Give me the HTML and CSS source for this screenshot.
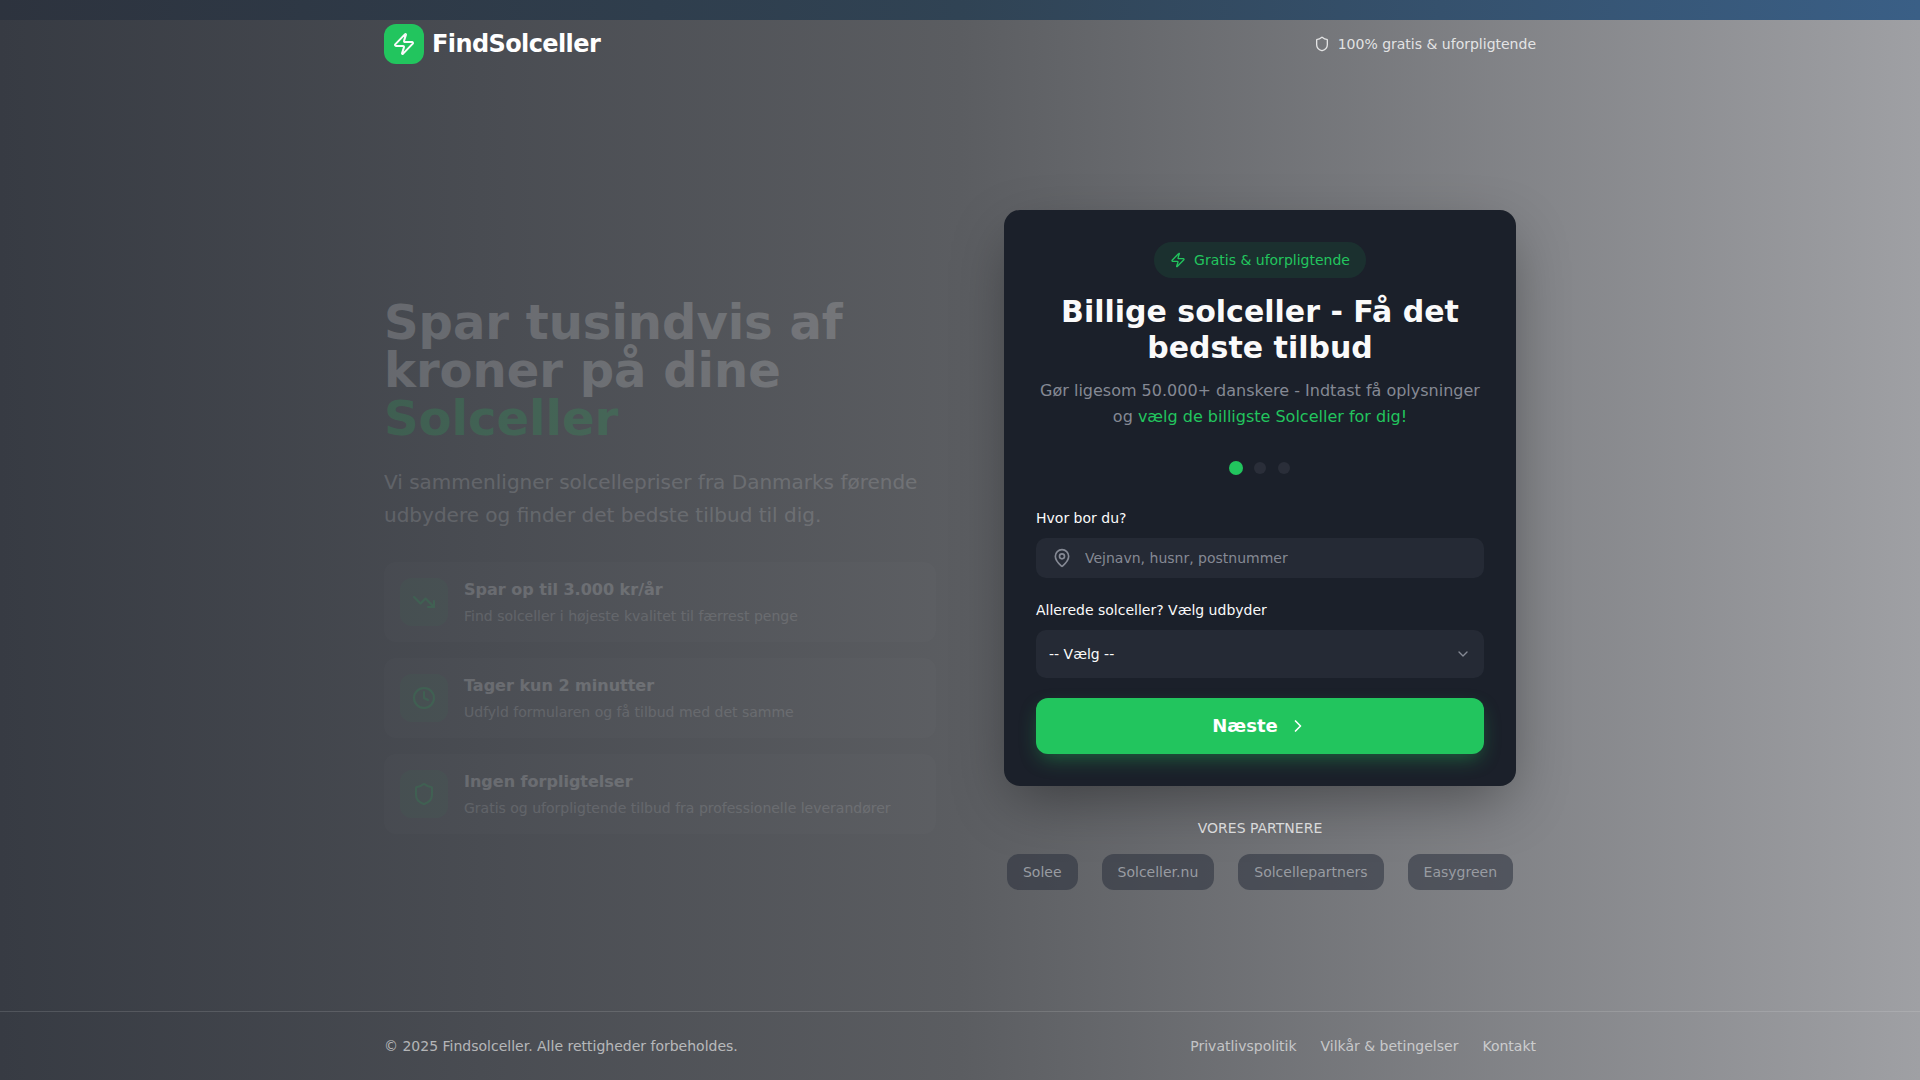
FILE: index.html
```
<!DOCTYPE html>
<html lang="da">
<head>
  <meta charset="UTF-8" />
  <meta name="viewport" content="width=device-width, initial-scale=1.0"/>
  <title>FindSolceller</title>
  <link rel="stylesheet" href="styles.css">
</head>
<body>

  <header class="container header">
    <div class="logo">
      <span class="logo-icon">
        <svg class="icon-md" viewBox="0 0 24 24"><path d="M4 14a1 1 0 0 1-.78-1.63l9.9-10.2a.5.5 0 0 1 .86.46l-1.92 6.02A1 1 0 0 0 13 10h7a1 1 0 0 1 .78 1.63l-9.9 10.2a.5.5 0 0 1-.86-.46l1.92-6.02A1 1 0 0 0 11 14z"/></svg>
      </span>
      <span class="logo-text">FindSolceller</span>
    </div>
    <div class="trust">
      <svg class="icon-sm" viewBox="0 0 24 24"><path d="M20 13c0 5-3.5 7.5-7.66 8.95a1 1 0 0 1-.67-.01C7.5 20.5 4 18 4 13V6a1 1 0 0 1 1-1c2 0 4.5-1.2 6.24-2.72a1.17 1.17 0 0 1 1.52 0C14.51 3.81 17 5 19 5a1 1 0 0 1 1 1z"/></svg>
      <span>100% gratis &amp; uforpligtende</span>
    </div>
  </header>

  <main class="container hero">
    <section class="intro">
      <h1>Spar tusindvis af kroner på dine <span class="green">Solceller</span></h1>
      <p class="lead">Vi sammenligner solcellepriser fra Danmarks førende udbydere og finder det bedste tilbud til dig.</p>

      <div class="features">
        <div class="feature">
          <span class="feature-icon">
            <svg class="icon-md" viewBox="0 0 24 24"><path d="M22 17l-8.5-8.5-5 5L2 7"/><path d="M16 17h6v-6"/></svg>
          </span>
          <div>
            <h3>Spar op til 3.000 kr/år</h3>
            <p>Find solceller i højeste kvalitet til færrest penge</p>
          </div>
        </div>
        <div class="feature">
          <span class="feature-icon">
            <svg class="icon-md" viewBox="0 0 24 24"><circle cx="12" cy="12" r="10"/><path d="M12 6v6l4 2"/></svg>
          </span>
          <div>
            <h3>Tager kun 2 minutter</h3>
            <p>Udfyld formularen og få tilbud med det samme</p>
          </div>
        </div>
        <div class="feature">
          <span class="feature-icon">
            <svg class="icon-md" viewBox="0 0 24 24"><path d="M20 13c0 5-3.5 7.5-7.66 8.95a1 1 0 0 1-.67-.01C7.5 20.5 4 18 4 13V6a1 1 0 0 1 1-1c2 0 4.5-1.2 6.24-2.72a1.17 1.17 0 0 1 1.52 0C14.51 3.81 17 5 19 5a1 1 0 0 1 1 1z"/></svg>
          </span>
          <div>
            <h3>Ingen forpligtelser</h3>
            <p>Gratis og uforpligtende tilbud fra professionelle leverandører</p>
          </div>
        </div>
      </div>
    </section>

    <section class="quote">
      <form class="card">
        <div class="badge">
          <svg class="icon-sm" viewBox="0 0 24 24"><path d="M4 14a1 1 0 0 1-.78-1.63l9.9-10.2a.5.5 0 0 1 .86.46l-1.92 6.02A1 1 0 0 0 13 10h7a1 1 0 0 1 .78 1.63l-9.9 10.2a.5.5 0 0 1-.86-.46l1.92-6.02A1 1 0 0 0 11 14z"/></svg>
          <span>Gratis &amp; uforpligtende</span>
        </div>
        <h2>Billige solceller - Få det bedste tilbud</h2>
        <p class="card-text">Gør ligesom 50.000+ danskere - Indtast få oplysninger og <span class="green">vælg de billigste Solceller for dig!</span></p>

        <div class="steps">
          <span class="step active"></span>
          <span class="step"></span>
          <span class="step"></span>
        </div>

        <label for="address">Hvor bor du?</label>
        <div class="field">
          <svg class="pin" viewBox="0 0 24 24"><path d="M20 10c0 5-5.54 10.19-7.4 11.8a1 1 0 0 1-1.2 0C9.54 20.19 4 15 4 10a8 8 0 0 1 16 0"/><circle cx="12" cy="10" r="3"/></svg>
          <input type="text" id="address" placeholder="Vejnavn, husnr, postnummer">
        </div>

        <label for="provider">Allerede solceller? Vælg udbyder</label>
        <div class="field select-field">
          <select id="provider">
            <option>-- Vælg --</option>
          </select>
          <svg class="chevron" viewBox="0 0 24 24"><path d="M6 9l6 6 6-6"/></svg>
        </div>

        <button type="button" class="next">
          Næste
          <svg class="icon-btn" viewBox="0 0 24 24"><path d="M9 18l6-6-6-6"/></svg>
        </button>
      </form>

      <p class="partners-title">Vores partnere</p>
      <div class="partners">
        <span>Solee</span>
        <span>Solceller.nu</span>
        <span>Solcellepartners</span>
        <span>Easygreen</span>
      </div>
    </section>
  </main>

  <footer class="footer">
    <div class="container footer-inner">
      <p>© 2025 Findsolceller. Alle rettigheder forbeholdes.</p>
      <nav>
        <a href="#">Privatlivspolitik</a>
        <a href="#">Vilkår &amp; betingelser</a>
        <a href="#">Kontakt</a>
      </nav>
    </div>
  </footer>

</body>
</html>
```

FILE: styles.css
```
* {
  box-sizing: border-box;
  margin: 0;
  padding: 0;
}

body {
  min-height: 100vh;
  display: flex;
  flex-direction: column;
  font-family: "DejaVu Sans", sans-serif;
  font-size: 14px;
  line-height: 20px;
  color: #fafafa;
  background-color: #5b5d62;
  background-image:
    linear-gradient(to right, #2d333e, #304354 50%, #3a5f86),
    linear-gradient(to right, #373b43, #5b5d61 50%, #9fa0a4);
  background-size: 100% 20px, 100% 100%;
  background-repeat: no-repeat;
}

svg {
  fill: none;
  stroke: currentColor;
  stroke-width: 2;
  stroke-linecap: round;
  stroke-linejoin: round;
  flex-shrink: 0;
}

.container {
  width: 100%;
  max-width: 1200px;
  margin: 0 auto;
  padding: 0 24px;
}

.green {
  color: #22c55e;
}

.icon-sm {
  width: 16px;
  height: 16px;
}

.icon-btn {
  width: 20px;
  height: 20px;
}

.icon-md {
  width: 24px;
  height: 24px;
}

/* Header */
.header {
  display: flex;
  align-items: center;
  justify-content: space-between;
  padding: 24px;
}

.logo,
.trust {
  display: flex;
  align-items: center;
  gap: 8px;
}

.logo-icon {
  display: flex;
  align-items: center;
  justify-content: center;
  width: 40px;
  height: 40px;
  border-radius: 12px;
  background: #22c55e;
}

.logo-text {
  font-size: 24px;
  line-height: 32px;
  font-weight: bold;
  letter-spacing: -0.6px;
  color: white;
}

.trust {
  color: rgba(255, 255, 255, 0.8);
}

/* Hero */
.hero {
  flex: 1;
  display: grid;
  grid-template-columns: 1fr 1fr;
  gap: 48px;
  align-items: center;
}

.intro {
  padding-top: 32px;
  opacity: 0.18;
}

h1 {
  font-size: 48px;
  line-height: 48px;
  margin-bottom: 24px;
}

.lead {
  font-size: 20px;
  line-height: 33px;
  margin-bottom: 30px;
  color: rgba(255, 255, 255, 0.8);
}

.features {
  display: grid;
  gap: 16px;
}

.feature {
  display: flex;
  gap: 16px;
  padding: 16px;
  border-radius: 12px;
  background: rgba(255, 255, 255, 0.08);
}

.feature-icon {
  display: flex;
  align-items: center;
  justify-content: center;
  width: 48px;
  height: 48px;
  border-radius: 12px;
  color: #22c55e;
  background: rgba(34, 197, 94, 0.22);
}

.feature h3 {
  font-size: 16px;
  line-height: 24px;
  margin-bottom: 4px;
}

.feature p {
  color: rgba(255, 255, 255, 0.7);
}

/* Quote form */
.quote {
  width: 100%;
  max-width: 512px;
  justify-self: center;
}

.card {
  display: flex;
  flex-direction: column;
  padding: 32px;
  margin-bottom: 32px;
  border-radius: 16px;
  background: #1b202a;
  box-shadow: 0 20px 60px -10px rgba(0, 0, 0, 0.4);
}

.badge {
  display: flex;
  align-items: center;
  align-self: center;
  gap: 8px;
  padding: 8px 16px;
  margin-bottom: 16px;
  border-radius: 18px;
  color: #22c55e;
  background: rgba(34, 197, 94, 0.1);
}

h2 {
  font-size: 30px;
  line-height: 36px;
  text-align: center;
  margin-bottom: 12px;
}

.card-text {
  font-size: 16px;
  line-height: 26px;
  text-align: center;
  color: #858994;
  margin-bottom: 32px;
}

.steps {
  display: flex;
  justify-content: center;
  gap: 12px;
  margin-bottom: 34px;
}

.step {
  width: 12px;
  height: 12px;
  border-radius: 50%;
  background: #2a2e39;
}

.step.active {
  background: #22c55e;
  box-shadow: 0 0 0 1px #22c55e;
}

label {
  margin-bottom: 10px;
}

.field {
  position: relative;
  display: flex;
  margin-bottom: 22px;
}

.select-field {
  margin-bottom: 20px;
}

input,
select {
  width: 100%;
  height: 40px;
  padding: 0 12px 0 49px;
  border: none;
  border-radius: 10px;
  font: inherit;
  color: #fafafa;
  background: #252a35;
}

select {
  height: 48px;
  padding: 0 13px;
  appearance: none;
}

input::placeholder {
  color: #858994;
}

.pin,
.chevron {
  position: absolute;
  top: 10px;
  left: 16px;
  width: 20px;
  height: 20px;
  color: #858994;
  pointer-events: none;
}

.chevron {
  top: 16px;
  left: auto;
  right: 13px;
  width: 16px;
  height: 16px;
}

.next {
  display: flex;
  align-items: center;
  justify-content: center;
  gap: 10px;
  height: 56px;
  border: none;
  border-radius: 12px;
  font: inherit;
  font-size: 18px;
  font-weight: bold;
  color: white;
  background: #22c55e;
  box-shadow: 0 8px 20px -4px rgba(34, 197, 94, 0.4);
  cursor: pointer;
}

/* Partners */
.partners-title {
  text-align: center;
  text-transform: uppercase;
  margin-bottom: 16px;
  color: rgba(255, 255, 255, 0.75);
}

.partners {
  display: flex;
  flex-wrap: wrap;
  justify-content: center;
  gap: 24px;
}

.partners span {
  padding: 8px 16px;
  border-radius: 12px;
  color: #999ca2;
  background: rgba(42, 47, 60, 0.55);
}

/* Footer */
.footer {
  border-top: 1px solid rgba(255, 255, 255, 0.13);
}

.footer-inner {
  display: flex;
  justify-content: space-between;
  padding: 24px;
  color: rgba(255, 255, 255, 0.6);
}

.footer nav {
  display: flex;
  gap: 24px;
}

.footer a {
  color: inherit;
  text-decoration: none;
}

@media screen and (max-width: 900px) {
  .hero {
    grid-template-columns: 1fr;
  }
}
```
